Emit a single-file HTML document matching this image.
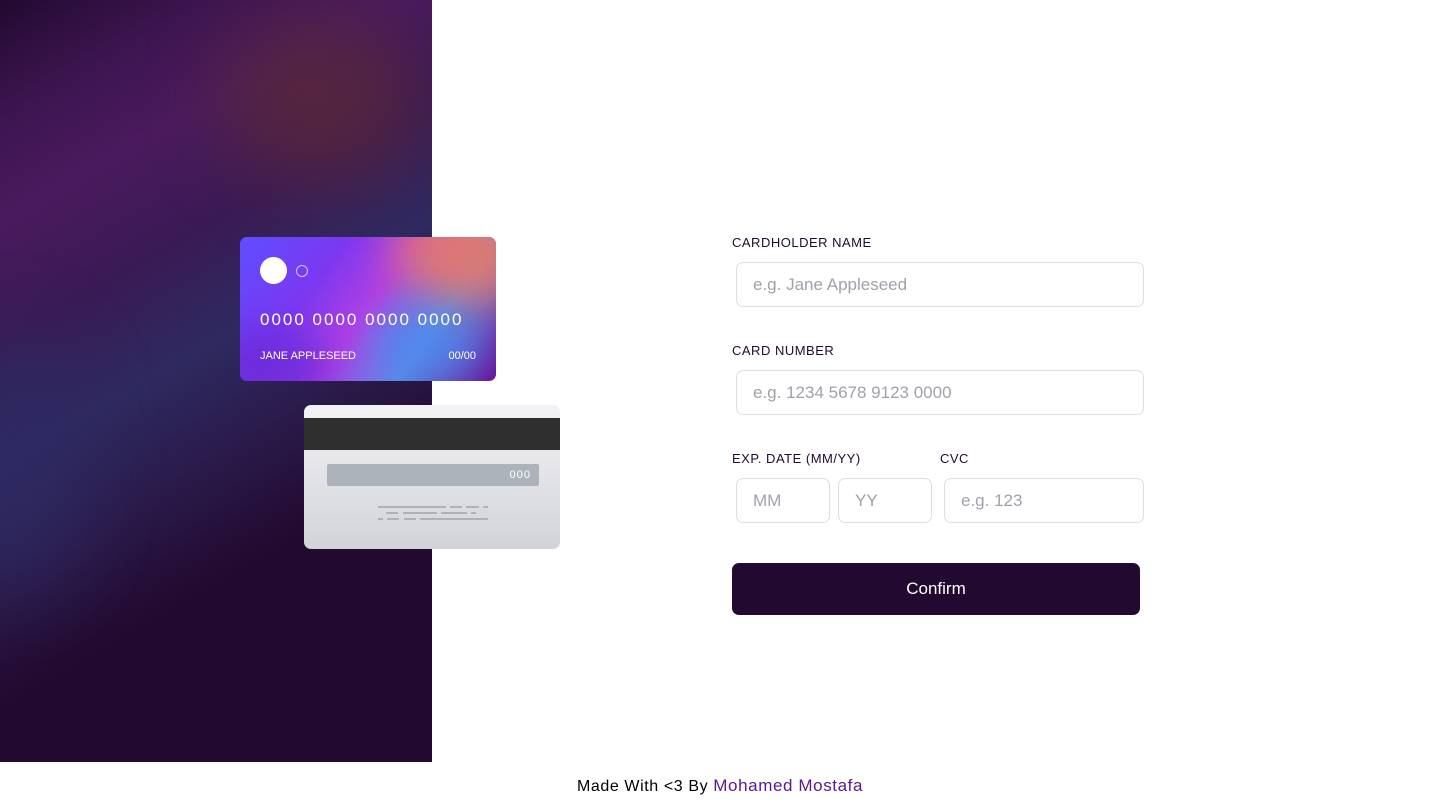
<!DOCTYPE html>
<html><head><meta charset="utf-8"><style>
*{box-sizing:border-box;margin:0;padding:0}
body{width:1440px;height:812px;background:#fff;font-family:"Liberation Sans",sans-serif;position:relative;overflow:hidden}
.left{position:absolute;left:0;top:0;width:432px;height:762px;overflow:hidden;
background:linear-gradient(150deg,#220a30 0%,#3d1550 12%,#4a1a5e 22%,#3a1a55 34%,#2e2a60 46%,#2a1a4a 58%,#22092f 70%,#22092f 100%)}
.blob{position:absolute;border-radius:50%;filter:blur(40px)}
.front{position:absolute;left:240px;top:237px;width:256px;height:144px;border-radius:7px;overflow:hidden;
background:linear-gradient(125deg,#5f4dff 0%,#7c38f0 30%,#b03fe4 50%,#5b8ae5 72%,#6a1299 100%)}
.front .o1{position:absolute;right:-40px;top:-40px;width:140px;height:110px;border-radius:50%;background:#e8786a;filter:blur(22px);opacity:.9}
.front .o2{position:absolute;left:130px;top:70px;width:110px;height:70px;border-radius:50%;background:#4d8aef;filter:blur(18px);opacity:.7}
.front .o3{position:absolute;left:-30px;top:90px;width:120px;height:80px;border-radius:50%;background:#6a2ad8;filter:blur(18px);opacity:.8}
.c1{position:absolute;left:20px;top:20px;width:27px;height:27px;border-radius:50%;background:#fff}
.c2{position:absolute;left:56px;top:28px;width:12px;height:12px;border-radius:50%;border:1px solid rgba(255,255,255,.7)}
.num{position:absolute;left:20px;top:73px;color:#fff;font-size:17px;letter-spacing:2px}
.nm{position:absolute;left:20px;top:113px;color:#fff;font-size:11px}
.ex{position:absolute;right:20px;top:113px;color:#fff;font-size:11px}
.back{position:absolute;left:304px;top:405px;width:256px;height:144px;border-radius:7px;overflow:hidden;background:linear-gradient(180deg,#f3f3f5,#d2d3d8)}
.strip{position:absolute;left:0;top:13px;width:100%;height:32px;background:#2f2f2f}
.cvc{position:absolute;left:23px;top:59px;width:212px;height:22px;background:#adb3bb;border-radius:2px;color:#fff;font-size:11px;text-align:right;padding:5px 8px 0 0;letter-spacing:1px}
.ln{position:absolute;height:2px;background:#adb3bb}
label{position:absolute;font-size:13px;color:#21092f;letter-spacing:.5px}
.in{position:absolute;height:45px;border:1px solid #dedde3;border-radius:7px;color:#a0a1ab;font-size:17px;padding:12px 0 0 16px}
.btn{position:absolute;left:732px;top:563px;width:408px;height:52px;background:#21092f;border-radius:7px;color:#fff;font-size:17px;text-align:center;line-height:52px}
.foot{position:absolute;top:776px;left:0;width:1440px;text-align:center;font-size:16px;color:#000;letter-spacing:.6px}
.foot span{color:#5a178e;font-size:17px}
</style></head><body>
<div class="left">
<div class="blob" style="left:220px;top:20px;width:200px;height:160px;background:#5a2838;opacity:.8"></div>
<div class="blob" style="left:-60px;top:330px;width:140px;height:260px;background:#2e2a62;opacity:.8"></div>
</div>
<div class="front"><div class="o1"></div><div class="o2"></div><div class="o3"></div>
<div class="c1"></div><div class="c2"></div>
<div class="num">0000 0000 0000 0000</div>
<div class="nm">JANE APPLESEED</div><div class="ex">00/00</div></div>
<div class="back"><div class="strip"></div><div class="cvc">000</div>
<div class="ln" style="left:74px;top:101px;width:68px"></div><div class="ln" style="left:146px;top:101px;width:12px"></div><div class="ln" style="left:162px;top:101px;width:13px"></div><div class="ln" style="left:179px;top:101px;width:5px"></div>
<div class="ln" style="left:82px;top:107px;width:12px"></div><div class="ln" style="left:99px;top:107px;width:34px"></div><div class="ln" style="left:137px;top:107px;width:26px"></div><div class="ln" style="left:167px;top:107px;width:5px"></div>
<div class="ln" style="left:74px;top:113px;width:5px"></div><div class="ln" style="left:83px;top:113px;width:12px"></div><div class="ln" style="left:100px;top:113px;width:12px"></div><div class="ln" style="left:116px;top:113px;width:68px"></div>
</div>
<label style="left:732px;top:235px">CARDHOLDER NAME</label>
<div class="in" style="left:736px;top:262px;width:408px">e.g. Jane Appleseed</div>
<label style="left:732px;top:343px">CARD NUMBER</label>
<div class="in" style="left:736px;top:370px;width:408px">e.g. 1234 5678 9123 0000</div>
<label style="left:732px;top:451px">EXP. DATE (MM/YY)</label>
<label style="left:940px;top:451px">CVC</label>
<div class="in" style="left:736px;top:478px;width:94px">MM</div>
<div class="in" style="left:838px;top:478px;width:94px">YY</div>
<div class="in" style="left:944px;top:478px;width:200px">e.g. 123</div>
<div class="btn">Confirm</div>
<div class="foot">Made With &lt;3 By <span>Mohamed Mostafa</span></div>
</body></html>
